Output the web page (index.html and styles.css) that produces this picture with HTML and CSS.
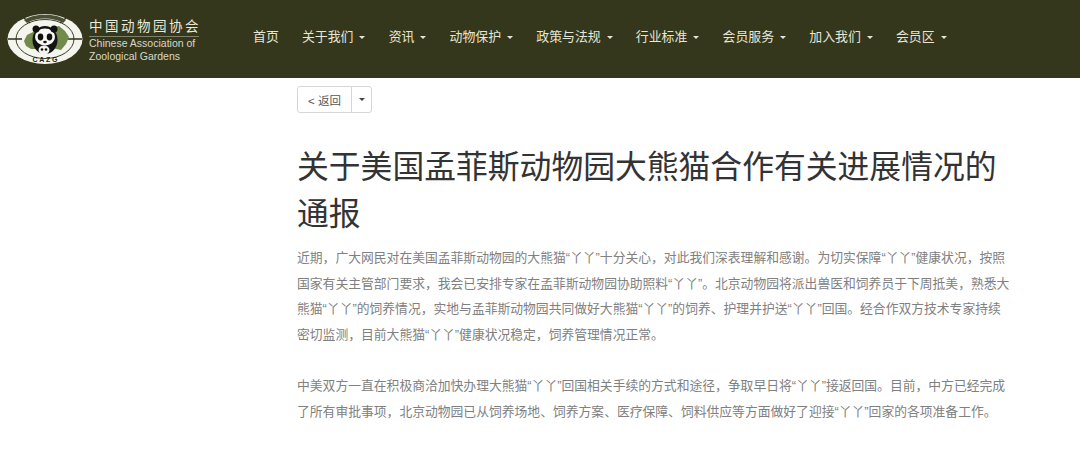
FILE: index.html
```html
<!DOCTYPE html>
<html lang="zh">
<head>
<meta charset="utf-8">
<title>关于美国孟菲斯动物园大熊猫合作有关进展情况的通报</title>
<link rel="stylesheet" href="styles.css">
</head>
<body>
<header class="topbar">
  <a class="brand">
    <svg class="logo" width="76" height="52" viewBox="0 0 76 52" aria-hidden="true">
      <ellipse cx="38" cy="26" rx="37.500" ry="25" fill="#f4f5ec"/>
      <ellipse cx="38" cy="26" rx="29" ry="19.500" fill="none" stroke="#3a3e28" stroke-width="1"/>
      <path d="M1 26H15M61 26H75M17 5 23 10M59 5 53 10" stroke="#2c3019" stroke-width="1.300"/>
      <path d="M17 28 20 22 26 19 31 17 31 36 24 36 19 33Z" fill="#728a4a"/>
      <path d="M44 15 52 13 58 18 62 24 59 31 54 37 45 35Z" fill="#728a4a"/>
      <path d="M17 7C27 0 49 0 59 7L56 10C47 4 29 4 20 10Z" fill="#4b4f36"/>
      <ellipse cx="38" cy="27" rx="12.500" ry="14" fill="#141414"/>
      <ellipse cx="38" cy="24" rx="10" ry="8.500" fill="#f8f8f4"/>
      <circle cx="29" cy="16" r="3.500" fill="#111"/>
      <circle cx="47" cy="16" r="3.500" fill="#111"/>
      <ellipse cx="33.500" cy="24" rx="2.800" ry="3.400" fill="#111"/>
      <ellipse cx="42.500" cy="24" rx="2.800" ry="3.400" fill="#111"/>
      <ellipse cx="38" cy="29" rx="1.800" ry="1.200" fill="#111"/>
      <ellipse cx="37" cy="37" rx="5.500" ry="4.500" fill="#f3f3ee"/>
      <circle cx="35" cy="36.500" r="1.300" fill="#111"/>
      <circle cx="39" cy="36.500" r="1.300" fill="#111"/>
      <text class="logo-mark" x="38" y="49" text-anchor="middle">C A Z G</text>
    </svg>
    <span class="brand-text">
      <span class="brand-cn">中国动物园协会</span>
      <span class="brand-en">Chinese Association of<br>Zoological Gardens</span>
    </span>
  </a>
  <nav class="nav">
    <a class="nav-item">首页</a>
    <a class="nav-item has-caret">关于我们</a>
    <a class="nav-item has-caret">资讯</a>
    <a class="nav-item has-caret">动物保护</a>
    <a class="nav-item has-caret">政策与法规</a>
    <a class="nav-item has-caret">行业标准</a>
    <a class="nav-item has-caret">会员服务</a>
    <a class="nav-item has-caret">加入我们</a>
    <a class="nav-item has-caret">会员区</a>
  </nav>
</header>
<main class="article">
  <div class="btn-group">
    <button class="btn btn-back" type="button">&lt; 返回</button>
    <button class="btn btn-toggle" type="button" aria-label="更多"><span class="caret"></span></button>
  </div>
  <h1 class="title">关于美国孟菲斯动物园大熊猫合作有关进展情况的通报</h1>
  <p class="para">近期，广大网民对在美国孟菲斯动物园的大熊猫“丫丫”十分关心，对此我们深表理解和感谢。为切实保障“丫丫”健康状况，按照国家有关主管部门要求，我会已安排专家在孟菲斯动物园协助照料“丫丫”。北京动物园将派出兽医和饲养员于下周抵美，熟悉大熊猫“丫丫”的饲养情况，实地与孟菲斯动物园共同做好大熊猫“丫丫”的饲养、护理并护送“丫丫”回国。经合作双方技术专家持续密切监测，目前大熊猫“丫丫”健康状况稳定，饲养管理情况正常。</p>
  <p class="para">中美双方一直在积极商洽加快办理大熊猫“丫丫”回国相关手续的方式和途径，争取早日将“丫丫”接返回国。目前，中方已经完成了所有审批事项，北京动物园已从饲养场地、饲养方案、医疗保障、饲料供应等方面做好了迎接“丫丫”回家的各项准备工作。</p>
</main>
</body>
</html>
```
FILE: styles.css
```css
* { box-sizing: border-box; }
html, body { height: 100%; }
body {
  margin: 0;
  background: #fff;
  overflow: hidden;
  font-family: "Liberation Sans", "Noto Sans CJK SC", sans-serif;
}
.topbar {
  height: 78px;
  background: #34371b;
  display: flex;
  align-items: flex-start;
}
.brand {
  width: 253px;
  flex: none;
  display: flex;
  align-items: flex-start;
  padding: 13px 0 0 7px;
  gap: 6px;
}
.logo { flex: none; }
.logo-mark { font: bold 7px "Liberation Sans", sans-serif; fill: #222; }
.brand-text { display: flex; flex-direction: column; padding-top: 4px; }
.brand-cn {
  color: #e9e9dc;
  font: 13.500px/17px "Noto Sans CJK SC", sans-serif;
  letter-spacing: 2.500px;
  padding-bottom: 2px;
  border-bottom: 1px solid #7d806a;
  width: 110px;
  white-space: nowrap;
}
.brand-en {
  color: #d8d8cb;
  font-size: 10.500px;
  line-height: 13px;
  margin-top: 0;
  white-space: nowrap;
}
.nav { display: flex; padding-top: 28px; }
.nav-item {
  color: #e6e6d8;
  font-size: 12.900px;
  line-height: 18px;
  white-space: nowrap;
  margin-right: 23.150px;
  display: flex;
  align-items: center;
}
.has-caret::after {
  content: "";
  margin-left: 6px;
  border-top: 3px solid #e6e6d8;
  border-left: 3px solid transparent;
  border-right: 3px solid transparent;
}
.article { width: 715px; margin-left: 297px; }
.btn-group { display: flex; padding-top: 8px; }
.btn {
  height: 27px;
  background: #fff;
  border: 1px solid #d6d6d6;
  color: #555;
  font-family: inherit;
  font-size: 11.500px;
  padding: 0;
  display: flex;
  align-items: center;
  justify-content: center;
}
.btn-back { width: 55px; border-radius: 3px 0 0 3px; }
.btn-toggle { width: 21px; margin-left: -1px; border-radius: 0 3px 3px 0; }
.caret {
  border-top: 3px solid #444;
  border-left: 3px solid transparent;
  border-right: 3px solid transparent;
}
.title {
  margin: 31px 0 0;
  color: #333;
  font-size: 31.800px;
  font-weight: 400;
  line-height: 47px;
}
.para {
  margin: 0 0 25px;
  color: #808080;
  font-size: 12.800px;
  line-height: 25.700px;
}
.title + .para { margin-top: 7px; }
```
